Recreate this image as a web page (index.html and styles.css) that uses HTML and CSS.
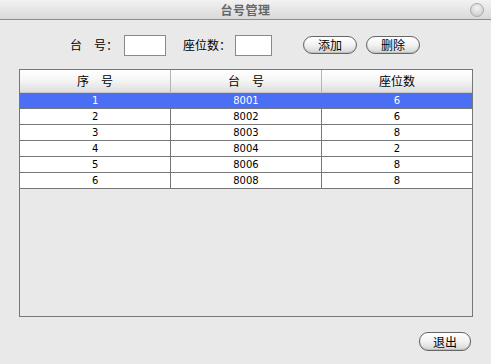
FILE: index.html
```html
<!DOCTYPE html>
<html lang="zh">
<head>
    <meta charset="UTF-8">
    <title>台号管理</title>
    <link rel="stylesheet" href="styles.css">
</head>
<body>
    <div class="window">
        <div class="titlebar">
            <span></span>
            <span class="title">台号管理</span>
            <span class="close-dot"></span>
        </div>

        <!-- 输入区 -->
        <div class="form-row">
            <label class="lbl">台　号：</label>
            <input class="box" type="text">
            <label class="lbl lbl-seat">座位数：</label>
            <input class="box box-seat" type="text">
            <button class="pill btn-add">添加</button>
            <button class="pill">删除</button>
        </div>

        <!-- 台号列表 -->
        <div class="table-box">
            <table class="grid">
                <thead>
                    <tr>
                        <th>序　号</th>
                        <th>台　号</th>
                        <th>座位数</th>
                    </tr>
                </thead>
                <tbody>
                    <tr class="selected"><td>1</td><td>8001</td><td>6</td></tr>
                    <tr><td>2</td><td>8002</td><td>6</td></tr>
                    <tr><td>3</td><td>8003</td><td>8</td></tr>
                    <tr><td>4</td><td>8004</td><td>2</td></tr>
                    <tr><td>5</td><td>8006</td><td>8</td></tr>
                    <tr><td>6</td><td>8008</td><td>8</td></tr>
                </tbody>
            </table>
        </div>

        <div class="footer">
            <button class="pill btn-exit">退出</button>
        </div>
    </div>
</body>
</html>
```

FILE: styles.css
```css
* {
    margin: 0;
    padding: 0;
    box-sizing: border-box;
}

body {
    width: 491px;
    height: 364px;
    background: #e9e9e9;
    font-family: "Noto Sans CJK SC", "DejaVu Sans", sans-serif;
    font-size: 12px;
    color: #000;
    overflow: hidden;
}

.window {
    height: 364px;
    display: flex;
    flex-direction: column;
}

.titlebar {
    height: 20px;
    display: grid;
    grid-template-columns: 1fr auto 1fr;
    align-items: center;
    background: linear-gradient(#f2f2f2, #d9d9d9);
    border-bottom: 1px solid #8c8c8c;
}

.title {
    font-size: 12px;
    font-weight: bold;
    color: #666;
    line-height: 19px;
    letter-spacing: 0.5px;
}

.close-dot {
    justify-self: end;
    margin-right: 7px;
    width: 14px;
    height: 14px;
    border-radius: 50%;
    border: 1px solid #a9a9a9;
    background: radial-gradient(circle at 50% 35%, #f4f4f4, #c4c4c4);
}

.form-row {
    display: flex;
    align-items: center;
    height: 22px;
    margin-top: 14px;
    padding-left: 70px;
}

.lbl {
    font-size: 12px;
    line-height: 22px;
    width: 48px;
    white-space: nowrap;
}

.lbl-seat {
    margin-left: 17px;
}

.box {
    width: 42px;
    height: 21px;
    margin-left: 6px;
    border: 1px solid #8a8a8a;
    background: #fff;
    outline: none;
}

.box-seat {
    width: 37px;
    margin-left: 4px;
}

.pill {
    height: 18px;
    width: 54px;
    border: 1px solid #666;
    border-radius: 9px;
    background: linear-gradient(#ffffff, #f2f2f2 50%, #d6d6d6);
    font-family: "Noto Sans CJK SC", sans-serif;
    font-size: 12px;
    line-height: 16px;
    color: #000;
    margin-left: 9px;
    box-shadow: inset 0 -1px 1px #bdbdbd;
}

.btn-add {
    margin-left: 31px;
}

.table-box {
    margin: 13px 19px 0 19px;
    width: 454px;
    height: 248px;
    border: 1px solid #777;
    background: #e9e9e9;
}

.grid {
    width: 452px;
    border-collapse: collapse;
    table-layout: fixed;
}

.grid th {
    height: 22px;
    font-weight: normal;
    font-size: 12px;
    background: linear-gradient(#ffffff, #f6f6f6 45%, #dedede);
    border-left: 1px solid #b5b5b5;
    border-bottom: 1px solid #c8c8c8;
    line-height: 20px;
}

.grid th:first-child {
    border-left: none;
}

.grid td {
    height: 16px;
    padding: 0;
    text-align: center;
    font-family: "DejaVu Sans", sans-serif;
    font-size: 10px;
    line-height: 15px;
    background: #fff;
    border-left: 1px solid #777;
    border-bottom: 1px solid #777;
}

.grid td:first-child {
    border-left: none;
}

.grid tr.selected td {
    background: #4a6ef4;
    color: #fff;
    border-left-color: #4a6ef4;
}

.footer {
    display: flex;
    justify-content: flex-end;
    padding-right: 20px;
    margin-top: 15px;
}

.btn-exit {
    width: 52px;
    height: 19px;
}
```
